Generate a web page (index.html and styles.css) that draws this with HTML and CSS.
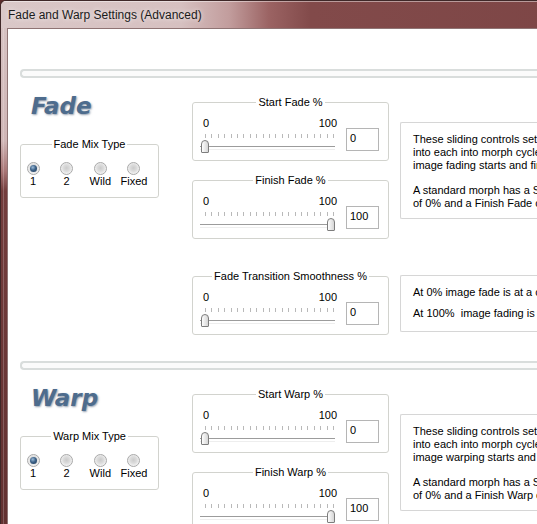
FILE: index.html
```html
<!DOCTYPE html>
<html lang="en">
<head>
<meta charset="utf-8">
<title>Fade and Warp Settings (Advanced)</title>
<link rel="stylesheet" href="styles.css">
</head>
<body>
<div class="window">
  <div class="titlebar"><span class="title">Fade and Warp Settings (Advanced)</span></div>
  <div class="frame">
    <div class="client">

      <section class="section">
        <div class="sep"></div>
        <div class="sec-body">
          <div class="left-col">
            <h2 class="sec-title">Fade</h2>
            <fieldset class="group mix">
              <legend>Fade Mix Type</legend>
              <div class="radios">
                <div class="opt"><span class="radio checked"></span><span class="opt-label">1</span></div>
                <div class="opt"><span class="radio"></span><span class="opt-label">2</span></div>
                <div class="opt"><span class="radio"></span><span class="opt-label">Wild</span></div>
                <div class="opt"><span class="radio"></span><span class="opt-label">Fixed</span></div>
              </div>
            </fieldset>
          </div>
          <div class="mid-col">
            <fieldset class="group slider-group">
              <legend>Start Fade %</legend>
              <div class="slider-row">
                <div class="slider">
                  <div class="scale"><span>0</span><span>100</span></div>
                  <div class="ticks"></div>
                  <div class="track"><span class="thumb"></span></div>
                </div>
                <div class="value">0</div>
              </div>
            </fieldset>
            <fieldset class="group slider-group next">
              <legend>Finish Fade %</legend>
              <div class="slider-row">
                <div class="slider">
                  <div class="scale"><span>0</span><span>100</span></div>
                  <div class="ticks"></div>
                  <div class="track"><span class="thumb max"></span></div>
                </div>
                <div class="value">100</div>
              </div>
            </fieldset>
            <fieldset class="group slider-group transition">
              <legend>Fade Transition Smoothness %</legend>
              <div class="slider-row">
                <div class="slider">
                  <div class="scale"><span>0</span><span>100</span></div>
                  <div class="ticks"></div>
                  <div class="track"><span class="thumb"></span></div>
                </div>
                <div class="value">0</div>
              </div>
            </fieldset>
          </div>
          <div class="right-col">
            <div class="info">
              <p>These sliding controls set the points<br>into each into morph cycle where<br>image fading starts and finishes.</p>
              <p>A standard morph has a Start Fade<br>of 0% and a Finish Fade of 100%.</p>
            </div>
            <div class="info info2">
              <p>At 0% image fade is at a constant rate.</p>
              <p>At 100%&nbsp; image fading is 'smooth'.</p>
            </div>
          </div>
        </div>
      </section>

      <section class="section second">
        <div class="sep"></div>
        <div class="sec-body">
          <div class="left-col">
            <h2 class="sec-title">Warp</h2>
            <fieldset class="group mix">
              <legend>Warp Mix Type</legend>
              <div class="radios">
                <div class="opt"><span class="radio checked"></span><span class="opt-label">1</span></div>
                <div class="opt"><span class="radio"></span><span class="opt-label">2</span></div>
                <div class="opt"><span class="radio"></span><span class="opt-label">Wild</span></div>
                <div class="opt"><span class="radio"></span><span class="opt-label">Fixed</span></div>
              </div>
            </fieldset>
          </div>
          <div class="mid-col">
            <fieldset class="group slider-group">
              <legend>Start Warp %</legend>
              <div class="slider-row">
                <div class="slider">
                  <div class="scale"><span>0</span><span>100</span></div>
                  <div class="ticks"></div>
                  <div class="track"><span class="thumb"></span></div>
                </div>
                <div class="value">0</div>
              </div>
            </fieldset>
            <fieldset class="group slider-group next">
              <legend>Finish Warp %</legend>
              <div class="slider-row">
                <div class="slider">
                  <div class="scale"><span>0</span><span>100</span></div>
                  <div class="ticks"></div>
                  <div class="track"><span class="thumb max"></span></div>
                </div>
                <div class="value">100</div>
              </div>
            </fieldset>
          </div>
          <div class="right-col">
            <div class="info">
              <p>These sliding controls set the points<br>into each into morph cycle where<br>image warping starts and finishes.</p>
              <p>A standard morph has a Start Warp<br>of 0% and a Finish Warp of 100%.</p>
            </div>
          </div>
        </div>
      </section>

    </div>
  </div>
</div>
</body>
</html>
```

FILE: styles.css
```css
* { box-sizing: border-box; }

html, body {
  margin: 0;
  padding: 0;
}

body {
  width: 537px;
  height: 524px;
  overflow: hidden;
  background: #5c2c2c;
  font-family: "Liberation Sans", Arial, sans-serif;
  font-size: 11px;
  color: #000;
}

.window {
  width: 640px;
  height: 600px;
  display: flex;
  flex-direction: column;
  border-top: 1px solid #3f2828;
  border-left: 1px solid #3f2828;
  border-top-left-radius: 6px;
  overflow: hidden;
  background: linear-gradient(to bottom, #d8c5c5 0px, #cfb5b5 140px, #a87676 170px, #733d3d 190px, #5e2e2e 600px);
}

.titlebar {
  flex: none;
  height: 27px;
  display: flex;
  align-items: center;
  padding: 2px 0 0 7px;
  background: linear-gradient(to right, #dac8c8 0px, #d6c0c0 180px, #c29d9d 228px, #9b6363 268px, #824a4a 310px, #7c4545 640px);
  box-shadow: inset 0 1px 0 rgba(255, 255, 255, 0.45);
}

.title {
  font-size: 12px;
  line-height: 15px;
  color: #1b1b1b;
  text-shadow: 0 0 5px rgba(255, 255, 255, 0.9);
}

.frame {
  flex: 1;
  padding-left: 6px;
  background: linear-gradient(to right, transparent 2px, rgba(255, 255, 255, 0.2) 2px, rgba(255, 255, 255, 0.2) 3px, transparent 3px);
}

.client {
  height: 100%;
  background: #fff;
  border-top: 1px solid #8f7474;
  border-left: 1px solid #8f7474;
  padding-top: 40px;
}

.section {
  padding-left: 12px;
}

.section.second {
  margin-top: 26px;
}

.sep {
  height: 9px;
  border: 2px solid #d9dddc;
  border-right: none;
  border-radius: 4px 0 0 4px;
  background: #fbfbfb;
}

.sec-body {
  display: flex;
  align-items: flex-start;
}

.left-col {
  flex: none;
  width: 139px;
}

.mid-col {
  flex: none;
  width: 197px;
  margin-left: 33px;
  margin-top: 18px;
}

.right-col {
  flex: none;
  width: 300px;
  margin-left: 11px;
}

.sec-title {
  margin: 15px 0 0;
  padding-left: 11px;
  font-family: "DejaVu Sans", Verdana, sans-serif;
  font-style: italic;
  font-weight: bold;
  font-size: 23px;
  line-height: 26px;
  color: #4e6c8d;
  text-shadow: 1px 1px 2px rgba(60, 80, 110, 0.55);
}

/* group boxes */
.group {
  margin: 0;
  padding: 0;
  min-width: 0;
  border: 1px solid #d2d3ce;
  border-radius: 3px;
}

.group legend {
  margin: 0 auto;
  padding: 0 2px;
  font-size: 11px;
  line-height: 13px;
}

.mix {
  margin-top: 19px;
}

.radios {
  display: flex;
  gap: 9.67px;
  padding: 11px 0 9px 0;
}

.opt {
  width: 24px;
  display: flex;
  flex-direction: column;
  align-items: center;
}

.opt-label {
  line-height: 13px;
  white-space: nowrap;
}

.radio {
  width: 13px;
  height: 13px;
  border-radius: 50%;
  border: 1px solid #a9a9a9;
  background: radial-gradient(circle at 50% 45%, #cbcbcb 0, #dcdcdc 40%, #f8f8f8 80%);
  display: flex;
  align-items: center;
  justify-content: center;
}

.radio.checked::after {
  content: "";
  width: 7px;
  height: 7px;
  border-radius: 50%;
  background: radial-gradient(circle at 40% 35%, #9cbbd8 0, #3d6288 45%, #1d3857 100%);
}

/* sliders */
.slider-group.next {
  margin-top: 13px;
}

.slider-group.transition {
  margin-top: 31px;
}

.slider-row {
  display: flex;
  align-items: flex-start;
  padding: 8px 9px 7px 7px;
}

.slider {
  flex: none;
  width: 137px;
}

.scale {
  display: flex;
  justify-content: space-between;
  padding-left: 3px;
  line-height: 13px;
}

.ticks {
  margin: 4px 0 0 5px;
  width: 129px;
  height: 4px;
  background: repeating-linear-gradient(to right, #b9b9b9 0, #b9b9b9 1px, transparent 1px, transparent 6.4px);
}

.track {
  position: relative;
  margin-top: 2px;
  height: 13px;
  padding: 6px 2px 0 0;
}

.track::before {
  content: "";
  display: block;
  height: 2px;
  border-top: 1px solid #9c9c9c;
  border-bottom: 1px solid #eeeeee;
}

.thumb {
  position: absolute;
  top: 0;
  left: 1px;
  width: 8px;
  height: 13px;
  border: 1px solid #7d7d7d;
  border-radius: 4px 4px 1px 1px;
  background: linear-gradient(to right, #fdfdfd, #d6d6d6);
}

.thumb.max {
  left: 127px;
}

.value {
  flex: none;
  width: 33px;
  height: 23px;
  margin: 11px 0 0 9px;
  padding: 3px 0 0 3px;
  border: 1px solid #b5b5b5;
  background: #fff;
  line-height: 13px;
}

/* info boxes */
.info {
  margin-top: 44px;
  padding: 10px 0 8px 12px;
  border: 1px solid #d6d6d6;
  border-right: none;
  border-radius: 2px 0 0 2px;
  line-height: 13px;
  white-space: nowrap;
}

.info p {
  margin: 0;
}

.info p + p {
  margin-top: 12px;
}

.info2 {
  margin-top: 56px;
  padding-bottom: 11px;
}

.info2 p + p {
  margin-top: 8px;
}
```
